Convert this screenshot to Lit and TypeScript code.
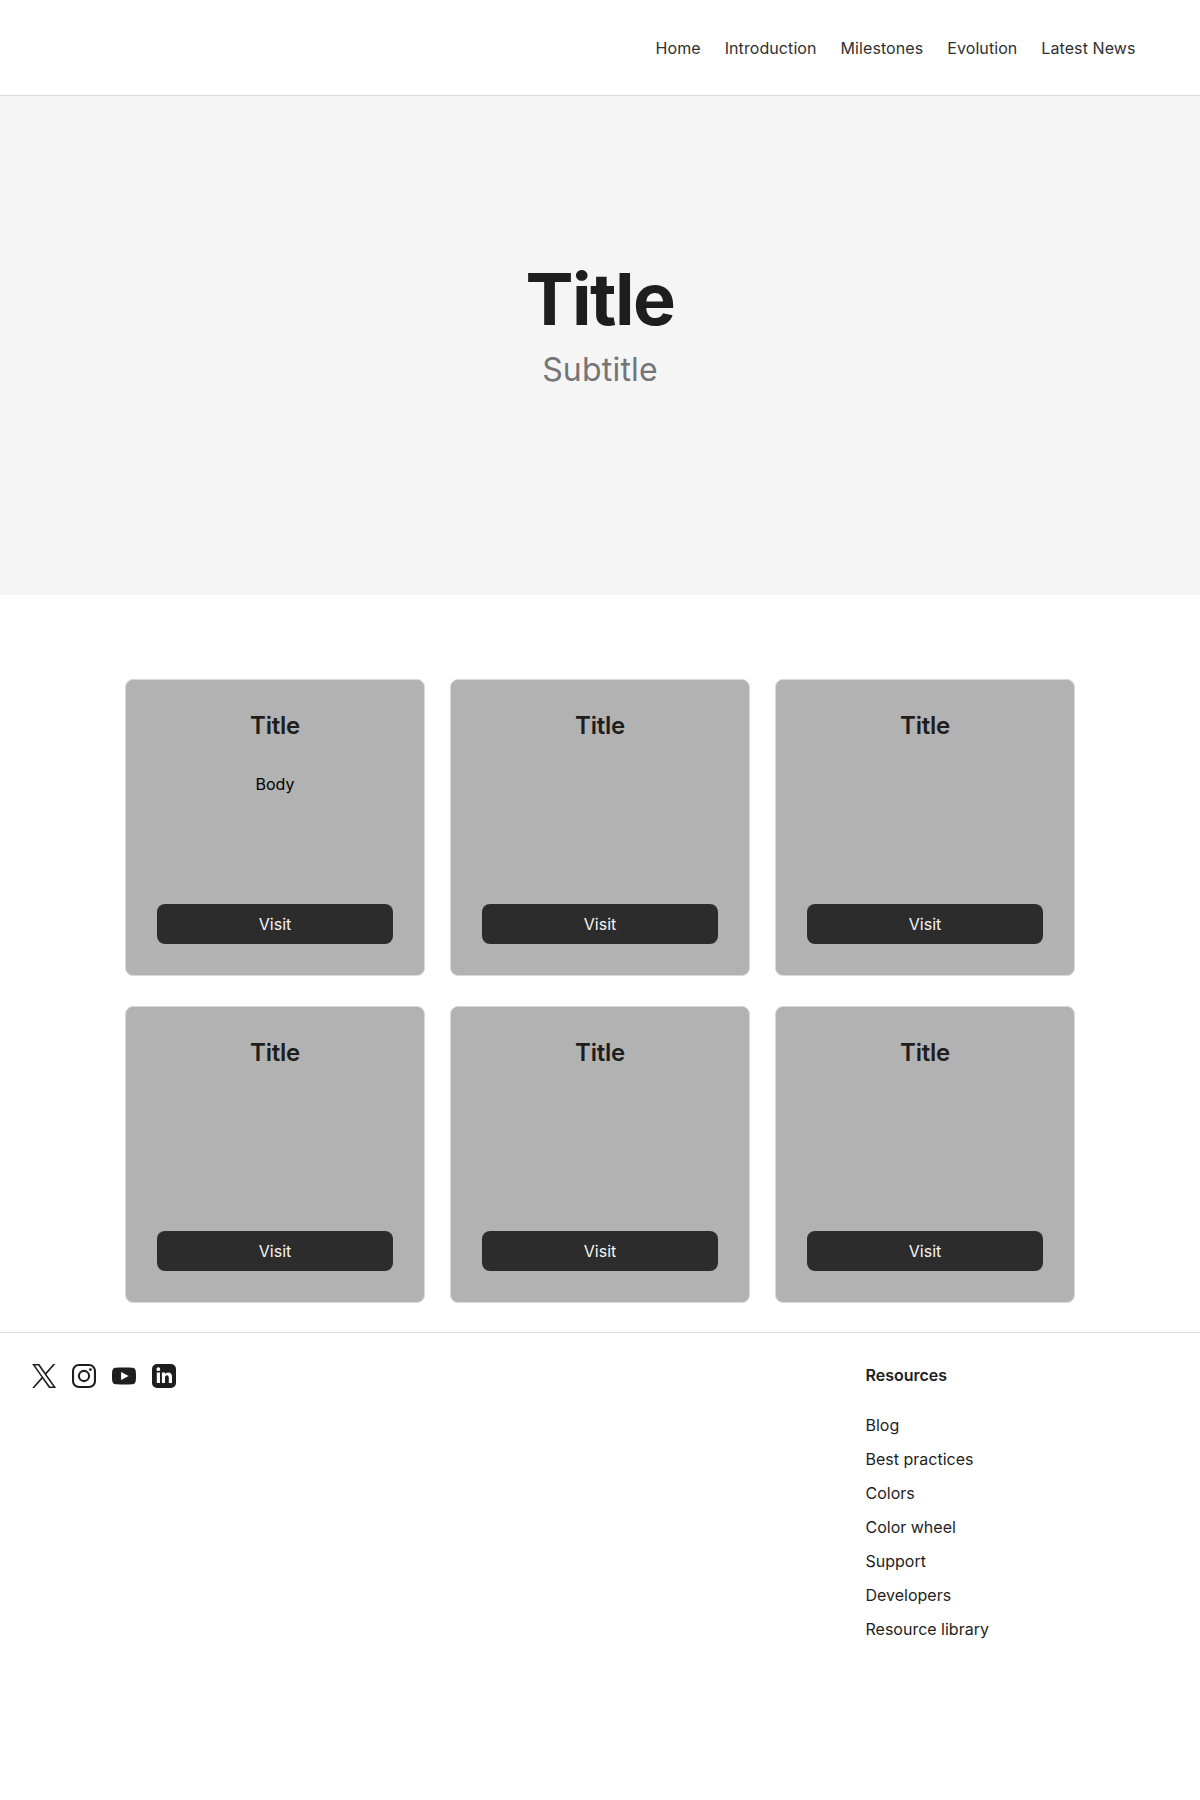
import { LitElement, html, css, nothing } from "lit";
import { customElement, property } from "lit/decorators.js";

@customElement("site-header")
class SiteHeader extends LitElement {
  static styles = css`
    :host { display: block; }
    .bar {
      box-sizing: border-box;
      display: flex;
      justify-content: flex-end;
      height: 96px;
      padding: 32px 56.5px 31px;
      border-bottom: 1px solid #d9d9d9;
      background: #fff;
    }
    .nav { display: flex; align-items: center; gap: 8px; }
    .link {
      padding: 8px;
      color: #303030;
      font-size: 16px;
      line-height: 16px;
      letter-spacing: 0.08px;
      text-decoration: none;
      white-space: nowrap;
    }
  `;
  links = ["Home", "Introduction", "Milestones", "Evolution", "Latest News"];
  render() {
    return html`<header class="bar">
      <nav class="nav">${this.links.map((l) => html`<a class="link" href="#">${l}</a>`)}</nav>
    </header>`;
  }
}

@customElement("hero-banner")
class HeroBanner extends LitElement {
  static styles = css`
    :host { display: block; }
    .hero {
      box-sizing: border-box;
      display: flex;
      flex-direction: column;
      align-items: center;
      gap: 9px;
      height: 499px;
      padding-top: 160px;
      background: #f5f5f5;
    }
    .title {
      margin: 0;
      color: #1e1e1e;
      font-size: 72px;
      font-weight: 700;
      line-height: 86px;
      letter-spacing: -1.5px;
    }
    .subtitle { margin: 0; color: #757575; font-size: 32px; line-height: 38px; letter-spacing: 0.2px; }
  `;
  render() {
    return html`<section class="hero">
      <h1 class="title">Title</h1>
      <p class="subtitle">Subtitle</p>
    </section>`;
  }
}

@customElement("link-card")
class LinkCard extends LitElement {
  static styles = css`
    :host { display: grid; }
    .card {
      display: flex;
      flex-direction: column;
      padding: 31px;
      border: 1px solid #d9d9d9;
      border-radius: 8px;
      background: #b2b2b2;
      text-align: center;
    }
    .title {
      margin: 0;
      color: #1e1e1e;
      font-size: 24px;
      font-weight: 600;
      line-height: 29px;
      letter-spacing: -0.24px;
    }
    .body { margin: 33px 0 0; color: #000; font-size: 16px; line-height: 22px; }
    .button {
      margin-top: auto;
      padding: 12px;
      border: 0;
      border-radius: 8px;
      background: #2c2c2c;
      color: #f5f5f5;
      font: inherit;
      font-size: 16px;
      line-height: 16px;
    }
  `;
  @property() heading = "";
  @property() body = "";
  render() {
    return html`<article class="card">
      <h2 class="title">${this.heading}</h2>
      ${this.body ? html`<p class="body">${this.body}</p>` : nothing}
      <button class="button">Visit</button>
    </article>`;
  }
}

@customElement("site-footer")
class SiteFooter extends LitElement {
  static styles = css`
    :host { display: block; }
    .footer {
      display: flex;
      justify-content: space-between;
      padding: 31px 72px 160px 32px;
      border-top: 1px solid #d9d9d9;
    }
    .social { display: flex; gap: 16px; height: 24px; }
    .icon { display: block; width: 24px; height: 24px; color: #1e1e1e; }
    .column { width: 262.5px; color: #1e1e1e; font-size: 16px; line-height: 22px; }
    .heading { margin: 0 0 28px; font-size: 16px; font-weight: 600; line-height: 22px; }
    .list { display: flex; flex-direction: column; gap: 12px; margin: 0; padding: 0; list-style: none; }
    .link { color: inherit; text-decoration: none; }
  `;
  links = ["Blog", "Best practices", "Colors", "Color wheel", "Support", "Developers", "Resource library"];
  render() {
    return html`<footer class="footer">
      <div class="social">
        <svg class="icon" viewBox="0 0 24 24" fill="currentColor" fill-rule="evenodd">
          <path d="M14.1 10.32 22.28 1h-1.94l-7.1 8.09L7.56 1H1l8.58 12.24L1 23h1.94l7.5-8.54L16.43 23H23zM11.44 13.34l-.87-1.22L3.64 2.43h2.98l5.58 7.81.87 1.22 7.27 10.15h-2.98z" transform="translate(-.95 -1.09) scale(1.0909)"/>
        </svg>
        <svg class="icon" viewBox="0 0 24 24" fill="none" stroke="currentColor" stroke-width="2.1">
          <rect x="1.05" y="1.05" width="21.9" height="21.9" rx="5.8"/>
          <circle cx="12" cy="12" r="5.1"/>
          <circle cx="18.4" cy="5.6" r="1.44" fill="currentColor" stroke="none"/>
        </svg>
        <svg class="icon" viewBox="0 0 24 24" fill="currentColor" fill-rule="evenodd">
          <path d="M23.76 7.2s-.23-1.66-.95-2.38c-.91-.96-1.93-.96-2.4-1.02C17.05 3.56 12 3.56 12 3.56s-5.05 0-8.41.24c-.47.06-1.49.06-2.4 1.02C.47 5.54.24 7.2.24 7.2S0 9.14 0 11.08v1.82c0 1.94.24 3.88.24 3.88s.23 1.66.95 2.38c.91.96 2.11.93 2.65 1.03C5.76 20.37 12 20.43 12 20.43s5.05-.01 8.41-.25c.47-.06 1.49-.06 2.4-1.02.72-.72.95-2.38.95-2.38s.24-1.94.24-3.88v-1.82c0-1.94-.24-3.88-.24-3.88zM9.1 15.9V7.9l7.5 4z"/>
        </svg>
        <svg class="icon" viewBox="0 0 24 24" fill="currentColor" fill-rule="evenodd">
          <path d="M5 0h14a5 5 0 0 1 5 5v14a5 5 0 0 1-5 5H5a5 5 0 0 1-5-5V5a5 5 0 0 1 5-5zM4.8 8.6V19h3.2V8.6zM6.35 3.3a1.9 1.9 0 1 0 0 3.8 1.9 1.9 0 0 0 0-3.8zM9.9 8.6V19H13v-5.3c0-1.6.6-2.5 1.95-2.5 1.3 0 1.85.9 1.85 2.5V19h3.2v-6.4c0-2.8-1.6-4.2-3.8-4.2-1.7 0-2.7.8-3.2 1.8V8.6z"/>
        </svg>
      </div>
      <section class="column">
        <h3 class="heading">Resources</h3>
        <ul class="list">${this.links.map((l) => html`<li><a class="link" href="#">${l}</a></li>`)}</ul>
      </section>
    </footer>`;
  }
}

@customElement("app-root")
class AppRoot extends LitElement {
  static styles = css`
    :host {
      display: block;
      min-height: 1800px;
      background: #fff;
      font-family: Inter, "Liberation Sans", sans-serif;
    }
    .cards {
      display: grid;
      grid-template-columns: repeat(3, 300px);
      grid-auto-rows: 297px;
      gap: 30px 25px;
      justify-content: center;
      padding: 84px 0 29px;
    }
  `;
  cards = ["Body", "", "", "", "", ""];
  render() {
    return html`
      <site-header></site-header>
      <hero-banner></hero-banner>
      <main class="cards">
        ${this.cards.map((b) => html`<link-card heading="Title" .body=${b}></link-card>`)}
      </main>
      <site-footer></site-footer>
    `;
  }
}
